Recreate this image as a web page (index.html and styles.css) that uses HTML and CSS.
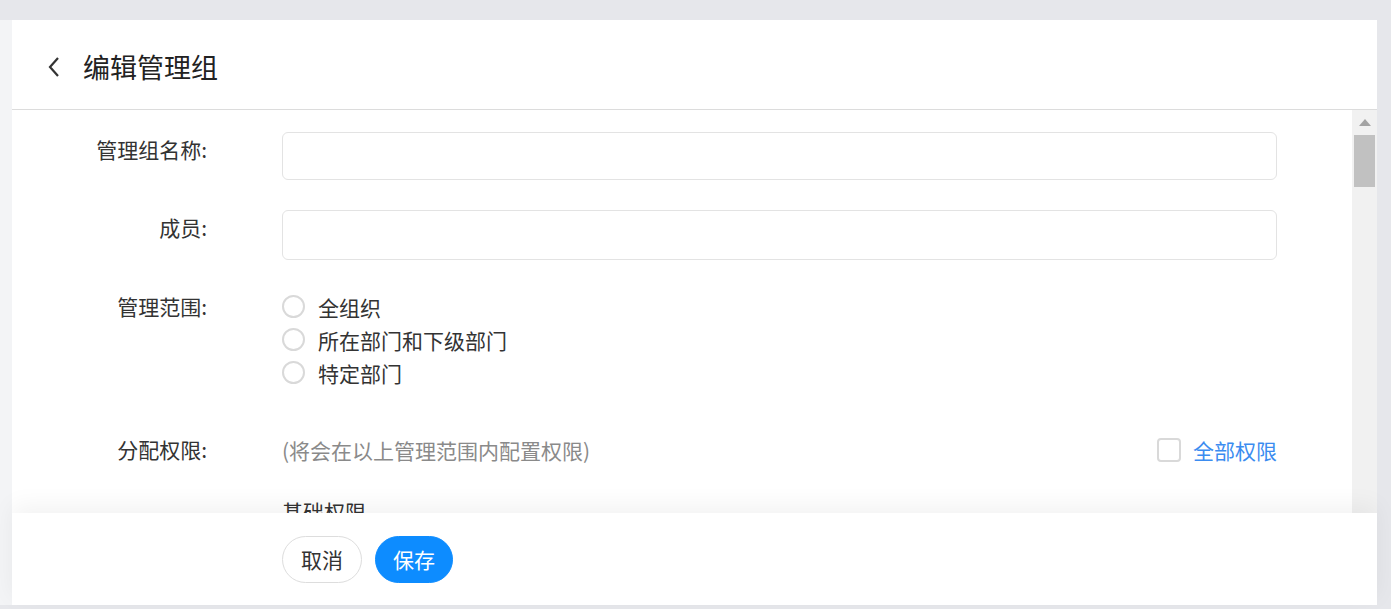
FILE: index.html
```html
<!DOCTYPE html>
<html lang="zh-CN">
  <head>
    <meta charset="utf-8" />
    <title>编辑管理组</title>
    <link rel="stylesheet" href="styles.css">
  </head>
  <body>
    <div class="side"></div>
    <main class="card">
      <header class="head">
        <svg class="back" width="14" height="22" viewBox="0 0 14 22">
          <path d="M11 2 L3 11 L11 20" fill="none" stroke="#333" stroke-width="2.2" />
        </svg>
        <h1>编辑管理组</h1>
      </header>

      <div class="body">
        <form class="form">
          <div class="row">
            <label class="label">管理组名称:</label>
            <input type="text" class="field" />
          </div>
          <div class="row">
            <label class="label">成员:</label>
            <input type="text" class="field tall" />
          </div>
          <div class="row row-radio">
            <label class="label">管理范围:</label>
            <div class="radios">
              <div class="radio"><span class="dot"></span>全组织</div>
              <div class="radio"><span class="dot"></span>所在部门和下级部门</div>
              <div class="radio"><span class="dot"></span>特定部门</div>
            </div>
          </div>
          <div class="row row-perm">
            <label class="label">分配权限:</label>
            <div class="perm">
              <span class="hint">(将会在以上管理范围内配置权限)</span>
              <span class="all"><span class="box"></span>全部权限</span>
            </div>
          </div>
          <div class="row row-base">
            <span></span>
            <div class="base">基础权限</div>
          </div>
        </form>
        <div class="scrollbar">
          <span class="arrow"></span>
          <span class="thumb"></span>
        </div>
      </div>

      <footer class="foot">
        <button type="button" class="btn">取消</button>
        <button type="button" class="btn btn-save">保存</button>
      </footer>
    </main>
  </body>
</html>
```

FILE: styles.css
```css
html, body {
  margin: 0;
  height: 100%;
}

body {
  display: flex;
  box-sizing: border-box;
  padding: 20px 14px 4px 0;
  background: #e6e7eb;
  font-family: "Noto Sans CJK SC", "Noto Sans", sans-serif;
  color: #333;
  overflow: hidden;
}

.side {
  width: 12px;
  background: #f3f4f6;
}

.card {
  flex: 1;
  display: flex;
  flex-direction: column;
  background: #ffffff;
  min-width: 0;
}

.head {
  height: 90px;
  display: flex;
  align-items: center;
  padding: 5px 0 0 35px;
  box-sizing: border-box;
  border-bottom: 1px solid #dcdcdc;
}

.back {
  display: block;
  margin-right: 22px;
}

.head h1 {
  margin: 0;
  font-size: 27px;
  font-weight: 400;
  line-height: 36px;
  color: #222;
}

.body {
  flex: 1;
  display: flex;
  overflow: hidden;
}

.form {
  flex: 1;
  padding-top: 22px;
}

.row {
  display: grid;
  grid-template-columns: 195px 995px;
  column-gap: 75px;
  margin-bottom: 30px;
}

.label {
  text-align: right;
  font-size: 21px;
  line-height: 30px;
  padding-top: 2px;
  color: #333;
}

.field {
  box-sizing: border-box;
  height: 48px;
  border: 1px solid #e3e3e3;
  border-radius: 6px;
  outline: none;
  font-size: 21px;
  padding: 0 14px;
}

.field.tall {
  height: 50px;
}

.row-radio {
  margin-top: 3px;
  margin-bottom: 44px;
}

.row-radio .label,
.row-perm .label {
  line-height: 33px;
  padding-top: 0;
}

.radio {
  display: flex;
  align-items: center;
  height: 33px;
  font-size: 21px;
}

.dot {
  box-sizing: border-box;
  width: 23px;
  height: 23px;
  border: 2px solid #d9d9d9;
  border-radius: 50%;
  margin-right: 13px;
}

.perm {
  display: flex;
  justify-content: space-between;
  align-items: center;
  height: 33px;
  font-size: 21px;
}

.hint {
  color: #8a8a8a;
}

.all {
  display: flex;
  align-items: center;
  color: #3b8cf0;
}

.box {
  box-sizing: border-box;
  width: 24px;
  height: 24px;
  border: 2px solid #d9d9d9;
  border-radius: 4px;
  margin-right: 12px;
}

.row-base {
  margin-bottom: 0;
}

.base {
  font-size: 21px;
  line-height: 30px;
}

.scrollbar {
  width: 25px;
  background: #f1f1f1;
  display: flex;
  flex-direction: column;
  align-items: center;
}

.arrow {
  margin-top: 9px;
  width: 0;
  height: 0;
  border-left: 6px solid transparent;
  border-right: 6px solid transparent;
  border-bottom: 7px solid #a3a3a3;
}

.thumb {
  margin-top: 9px;
  width: 21px;
  height: 52px;
  background: #c1c1c1;
}

.foot {
  position: relative;
  height: 92px;
  display: flex;
  align-items: center;
  gap: 13px;
  padding: 0 0 0 270px;
  background: #ffffff;
  box-shadow: 0 -8px 22px rgba(0, 0, 0, 0.05);
}

.btn {
  height: 47px;
  min-width: 80px;
  padding: 0 17px;
  border: 1px solid #dddddd;
  border-radius: 24px;
  background: #ffffff;
  font-family: "Noto Sans CJK SC", sans-serif;
  font-size: 21px;
  color: #333;
}

.btn-save {
  min-width: 78px;
  border-color: #0d8cff;
  background: #0d8cff;
  color: #ffffff;
}
```
